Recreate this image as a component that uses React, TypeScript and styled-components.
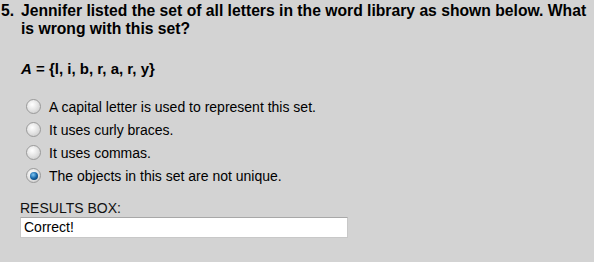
import styled, { createGlobalStyle } from "styled-components";

const GlobalStyle = createGlobalStyle`
  html, body {
    margin: 0;
    padding: 0;
    background: #d3d3d3;
  }
  body {
    font-family: "Liberation Sans", Arial, sans-serif;
    color: #000;
  }
`;

const Page = styled.div`
  width: 594px;
  height: 262px;
  background: #d3d3d3;
  padding: 2px 0 0 1px;
  box-sizing: border-box;
`;

const Question = styled.div`
  display: flex;
  font-size: 15.7px;
  font-weight: bold;
  line-height: 18px;
  white-space: nowrap;
`;

const Number = styled.span`
  width: 20px;
  flex-shrink: 0;
`;

const Body = styled.div`
  display: flex;
  flex-direction: column;
`;

const SetLine = styled.div`
  margin-top: 22px;
  font-size: 15px;
  font-weight: bold;
  line-height: 18px;
  margin-left: 20px;

  em {
    font-style: italic;
  }
`;

const Options = styled.div`
  display: flex;
  flex-direction: column;
  margin: 17px 0 0 25px;
`;

const Option = styled.label`
  display: flex;
  align-items: center;
  gap: 8px;
  height: 23px;
  font-size: 14px;
`;

const Radio = styled.span<{ $checked?: boolean }>`
  width: 13px;
  height: 13px;
  border-radius: 50%;
  border: 1px solid #9a9a9a;
  background: radial-gradient(circle at 40% 35%, #ffffff 0%, #e6e6e6 45%, #c4c4c4 100%);
  position: relative;
  flex-shrink: 0;

  &::after {
    content: "";
    display: ${({ $checked }) => ($checked ? "block" : "none")};
    position: absolute;
    left: 2.5px;
    top: 2.5px;
    width: 8px;
    height: 8px;
    border-radius: 50%;
    background: radial-gradient(circle at 40% 35%, #7fc8f5 0%, #1565a8 50%, #072c52 100%);
  }
`;

const Results = styled.div`
  margin: 14px 0 0 19px;
  display: flex;
  flex-direction: column;
  gap: 2px;
`;

const ResultsLabel = styled.div`
  font-size: 14px;
  line-height: 14px;
  color: #111;
`;

const ResultsBox = styled.div`
  width: 323px;
  height: 19px;
  background: #fff;
  border: 1px solid #c8c8c8;
  border-top-color: #a8a8a8;
  font-size: 14px;
  line-height: 19px;
  padding-left: 3px;
`;

const options = [
  { text: "A capital letter is used to represent this set.", checked: false },
  { text: "It uses curly braces.", checked: false },
  { text: "It uses commas.", checked: false },
  { text: "The objects in this set are not unique.", checked: true },
];

const App = () => (
  <>
    <GlobalStyle />
    <Page>
      <Question>
        <Number>5.</Number>
        <Body>
          <span>Jennifer listed the set of all letters in the word library as shown below. What</span>
          <span>is wrong with this set?</span>
        </Body>
      </Question>
      <SetLine>
        <em>A</em> = {"{l, i, b, r, a, r, y}"}
      </SetLine>
      <Options>
        {options.map((o) => (
          <Option key={o.text}>
            <Radio $checked={o.checked} />
            {o.text}
          </Option>
        ))}
      </Options>
      <Results>
        <ResultsLabel>RESULTS BOX:</ResultsLabel>
        <ResultsBox>Correct!</ResultsBox>
      </Results>
    </Page>
  </>
);

export default App;
